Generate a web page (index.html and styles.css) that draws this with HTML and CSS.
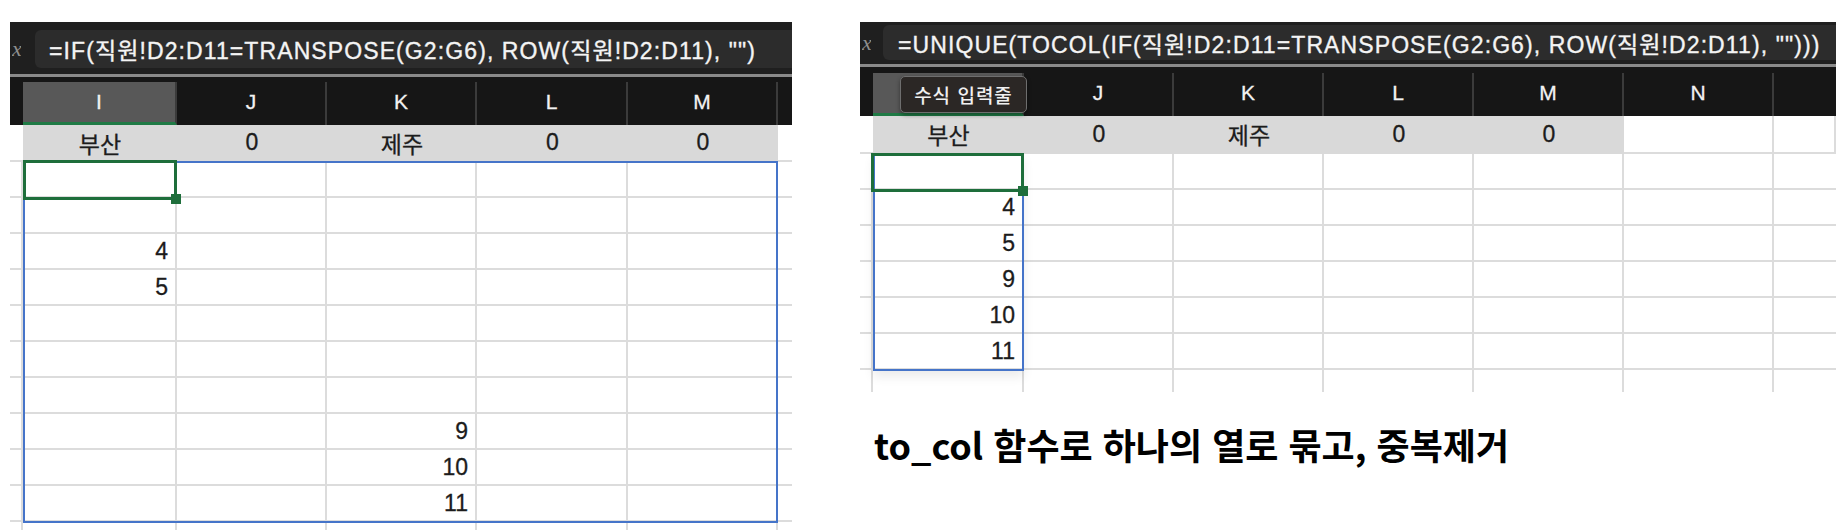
FILE: index.html
```html
<!DOCTYPE html>
<html lang="ko">
<head>
<meta charset="utf-8">
<title>TOCOL UNIQUE</title>
<link rel="stylesheet" href="styles.css">
</head>
<body>
<div class="page">
  <section class="sheet sheet-left">
    <div class="fbar fbar-left">
      <span class="fx">x</span>
      <div class="fbox"><span class="ftext">=IF(직원!D2:D11=TRANSPOSE(G2:G6), ROW(직원!D2:D11), "")</span></div>
    </div>
    <div class="fsep"></div>
    <div class="row hdr hdr-left">
      <div class="hc m"></div>
      <div class="hc act-h">I</div>
      <div class="hc">J</div>
      <div class="hc">K</div>
      <div class="hc">L</div>
      <div class="hc">M</div>
      <div class="hc last"></div>
    </div>
    <div class="row crit crit-left">
      <div class="cc m"></div>
      <div class="cc g">부산</div>
      <div class="cc g">0</div>
      <div class="cc g">제주</div>
      <div class="cc g">0</div>
      <div class="cc g">0</div>
      <div class="cc w"></div>
    </div>
    <div class="body">
      <div class="row"><div class="c m"></div><div class="c"></div><div class="c"></div><div class="c"></div><div class="c"></div><div class="c"></div><div class="c"></div></div>
      <div class="row"><div class="c m"></div><div class="c"></div><div class="c"></div><div class="c"></div><div class="c"></div><div class="c"></div><div class="c"></div></div>
      <div class="row"><div class="c m"></div><div class="c">4</div><div class="c"></div><div class="c"></div><div class="c"></div><div class="c"></div><div class="c"></div></div>
      <div class="row"><div class="c m"></div><div class="c">5</div><div class="c"></div><div class="c"></div><div class="c"></div><div class="c"></div><div class="c"></div></div>
      <div class="row"><div class="c m"></div><div class="c"></div><div class="c"></div><div class="c"></div><div class="c"></div><div class="c"></div><div class="c"></div></div>
      <div class="row"><div class="c m"></div><div class="c"></div><div class="c"></div><div class="c"></div><div class="c"></div><div class="c"></div><div class="c"></div></div>
      <div class="row"><div class="c m"></div><div class="c"></div><div class="c"></div><div class="c"></div><div class="c"></div><div class="c"></div><div class="c"></div></div>
      <div class="row"><div class="c m"></div><div class="c"></div><div class="c"></div><div class="c">9</div><div class="c"></div><div class="c"></div><div class="c"></div></div>
      <div class="row"><div class="c m"></div><div class="c"></div><div class="c"></div><div class="c">10</div><div class="c"></div><div class="c"></div><div class="c"></div></div>
      <div class="row"><div class="c m"></div><div class="c"></div><div class="c"></div><div class="c">11</div><div class="c"></div><div class="c"></div><div class="c"></div></div>
      <div class="row tail tail-left"><div class="c m"></div><div class="c"></div><div class="c"></div><div class="c"></div><div class="c"></div><div class="c"></div><div class="c"></div></div>
      <div class="sel sel-left"></div>
      <div class="act act-left"></div>
    </div>
  </section>

  <div class="right-col">
    <section class="sheet sheet-right">
      <div class="fbar fbar-right">
        <span class="fx">x</span>
        <div class="fbox"><span class="ftext">=UNIQUE(TOCOL(IF(직원!D2:D11=TRANSPOSE(G2:G6), ROW(직원!D2:D11), "")))</span></div>
      </div>
      <div class="fsep"></div>
      <div class="row hdr hdr-right">
        <div class="hc m"></div>
        <div class="hc act-h"></div>
        <div class="hc">J</div>
        <div class="hc">K</div>
        <div class="hc">L</div>
        <div class="hc">M</div>
        <div class="hc">N</div>
        <div class="hc last"></div>
        <div class="tip">수식 입력줄</div>
      </div>
      <div class="row crit crit-right">
        <div class="cc m"></div>
        <div class="cc g">부산</div>
        <div class="cc g">0</div>
        <div class="cc g">제주</div>
        <div class="cc g">0</div>
        <div class="cc g">0</div>
        <div class="cc w"></div>
        <div class="cc w"></div>
      </div>
      <div class="body">
        <div class="row"><div class="c m"></div><div class="c"></div><div class="c"></div><div class="c"></div><div class="c"></div><div class="c"></div><div class="c"></div><div class="c"></div></div>
        <div class="row"><div class="c m"></div><div class="c">4</div><div class="c"></div><div class="c"></div><div class="c"></div><div class="c"></div><div class="c"></div><div class="c"></div></div>
        <div class="row"><div class="c m"></div><div class="c">5</div><div class="c"></div><div class="c"></div><div class="c"></div><div class="c"></div><div class="c"></div><div class="c"></div></div>
        <div class="row"><div class="c m"></div><div class="c">9</div><div class="c"></div><div class="c"></div><div class="c"></div><div class="c"></div><div class="c"></div><div class="c"></div></div>
        <div class="row"><div class="c m"></div><div class="c">10</div><div class="c"></div><div class="c"></div><div class="c"></div><div class="c"></div><div class="c"></div><div class="c"></div></div>
        <div class="row"><div class="c m"></div><div class="c">11</div><div class="c"></div><div class="c"></div><div class="c"></div><div class="c"></div><div class="c"></div><div class="c"></div></div>
        <div class="row tail tail-right"><div class="c m"></div><div class="c"></div><div class="c"></div><div class="c"></div><div class="c"></div><div class="c"></div><div class="c"></div><div class="c"></div></div>
        <div class="sel sel-right"></div>
        <div class="act act-right"></div>
      </div>
    </section>
    <p class="caption">to_col 함수로 하나의 열로 묶고, 중복제거</p>
  </div>
</div>
</body>
</html>
```

FILE: styles.css
```css
* { box-sizing: border-box; }

body {
  margin: 0;
  background: #ffffff;
  font-family: "Liberation Sans", Arial, "Noto Sans CJK KR", sans-serif;
  color: #1a1a1a;
}

.page {
  display: flex;
  align-items: flex-start;
  gap: 68px;
  padding: 22px 0 0 10px;
  height: 530px;
  overflow: hidden;
}

.sheet-left { width: 782px; flex: none; }
.right-col { width: 976px; flex: none; display: flex; flex-direction: column; }

/* formula bar */
.fbar {
  display: flex;
  align-items: center;
  background: #1f1f1f;
}
.fbar-left { height: 52px; padding: 8px 0 6px 2px; }
.fbar-right { height: 42px; padding: 3px 0 4px 2px; }

.fx {
  font-family: "Liberation Serif", serif;
  font-style: italic;
  font-size: 22px;
  color: #8e8e8e;
  width: 9px;
  overflow: hidden;
  flex: none;
}
.fbar-left .fbox { margin-left: 14px; }
.fbar-right .fbox { margin-left: 12px; }

.fbox {
  flex: 1;
  height: 100%;
  background: #2c2c2c;
  border-radius: 6px 0 0 6px;
  display: flex;
  align-items: center;
  padding-left: 14px;
  overflow: hidden;
}
.fbar-right .fbox { padding-left: 15px; }

.ftext {
  color: #f4f4f4;
  font-family: "Liberation Sans", "Noto Sans CJK KR", sans-serif;
  font-size: 23px;
  letter-spacing: 1.1px;
  white-space: nowrap;
  -webkit-text-stroke: 0.35px #f4f4f4;
}

.fsep { height: 3px; background: #8a8a8a; }

/* rows */
.row { display: grid; }
.sheet-left .row { grid-template-columns: 13px 154px 150px 150px 151px 150px 14px; }
.sheet-right .row { grid-template-columns: 13px 151px 150px 150px 150px 150px 150px 62px; }

/* column headers */
.hdr { background: #161616; position: relative; }
.hdr-left { padding-top: 5px; }
.hdr-right { padding-top: 6px; }

.hc {
  height: 43px;
  border-right: 2px solid #3b3b3b;
  color: #f2f2f2;
  font-size: 21px;
  display: flex;
  align-items: center;
  justify-content: center;
  padding-bottom: 3px;
  -webkit-text-stroke: 0.3px #f2f2f2;
}
.hc.m, .hc.last { border-right: none; }
.hc.act-h {
  background: #585858;
  border-bottom: 3px solid #1f7a45;
  padding-bottom: 0;
}

.tip {
  position: absolute;
  left: 40px;
  top: 9px;
  width: 127px;
  height: 37px;
  background: #2b2725;
  border: 1.5px solid #6e6e6e;
  border-radius: 5px;
  color: #f0f0f0;
  font-family: "Noto Sans CJK KR", sans-serif;
  font-size: 19px;
  font-weight: 500;
  letter-spacing: 1px;
  display: flex;
  align-items: center;
  justify-content: center;
  box-shadow: 0 2px 4px rgba(0,0,0,0.4);
}

/* criteria (gray) row */
.cc {
  height: 37px;
  border-bottom: 2px solid #dcdcdc;
  display: flex;
  align-items: center;
  justify-content: center;
  font-size: 23px;
  color: #1c1c1c;
  font-family: "Liberation Sans", "Noto Sans CJK KR", sans-serif;
  -webkit-text-stroke: 0.3px #1c1c1c;
}
.crit-right .cc { height: 38px; }
.cc.g { background: #d9d9d9; border-bottom-color: #d9d9d9; }
.cc.w { border-right: 2px solid #dcdcdc; background: #fff; }
.crit-left .cc.w { border-right: none; }

/* data cells */
.body { position: relative; }
.c {
  height: 36px;
  border-right: 2px solid #dcdcdc;
  border-bottom: 2px solid #dcdcdc;
  font-size: 23px;
  line-height: 34px;
  text-align: right;
  padding-right: 7px;
  color: #1c1c1c;
  -webkit-text-stroke: 0.3px #1c1c1c;
}
.c.m { padding: 0; }
.tail-left .c { height: 8px; border-bottom: none; }
.tail-right .c { height: 22px; border-bottom: none; }
.sheet-left .row .c:last-child { border-right: none; }
.sheet-right .row .c:last-child { border-right: none; }

/* selection overlays */
.sel {
  position: absolute;
  border: 2px solid #4574c9;
}
.sel-left { left: 13px; top: -1px; width: 755px; height: 362px; }
.sel-right { left: 13px; top: -1px; width: 151px; height: 218px; box-shadow: 0 6px 10px rgba(0,0,0,0.08); }

.act {
  position: absolute;
  border: 3px solid #1e6e3b;
}
.act::after {
  content: "";
  position: absolute;
  right: -7px;
  bottom: -7px;
  width: 10px;
  height: 10px;
  background: #1e6e3b;
}
.act-left { left: 13px; top: -2px; width: 154px; height: 40px; }
.act-right { left: 11px; top: -1px; width: 153px; height: 39px; }

/* caption */
.caption {
  margin: 34px 0 0 14px;
  font-family: "Noto Sans CJK KR", sans-serif;
  font-weight: 700;
  font-size: 36px;
  line-height: 36px;
  color: #000;
  white-space: nowrap;
}
```
